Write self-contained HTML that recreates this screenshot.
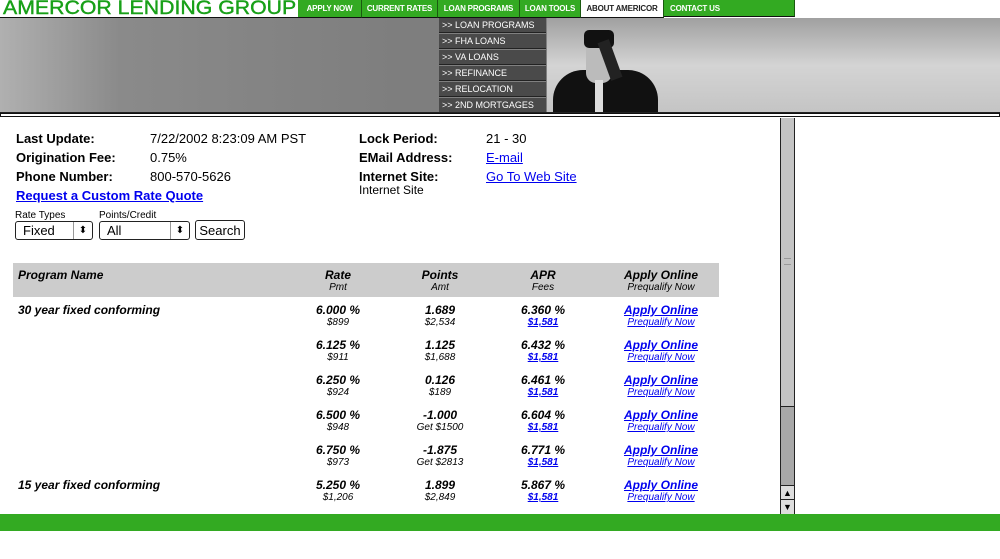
<!DOCTYPE html>
<html><head><style>
body{margin:0;width:1000px;height:559px;overflow:hidden;background:#fff;font-family:"Liberation Sans",Arial,sans-serif;position:relative}
.a{position:absolute}
.nav{top:0;height:17px;background:#33aa22;color:#fff;font-size:8px;font-weight:bold;line-height:17px;text-align:center;border-right:1px solid #1a5a10;border-bottom:1px solid #111;white-space:nowrap;overflow:hidden;letter-spacing:-0.2px}
.dd{left:439px;width:107px;height:15px;background:#4a4a4a;border-bottom:1px solid #222;color:#fff;font-size:9px;line-height:15px;padding-left:3px;box-sizing:border-box;white-space:nowrap}
.l{font-size:13px;font-weight:bold}
.v{font-size:13px}
a{color:#00e}
.c{text-align:center;width:120px;font-style:italic}
.b{font-size:12px;font-weight:bold}
.s{font-size:10px}
</style></head><body>
<div class="a" style="left:0;top:0;width:298px;height:18px;border-bottom:1px solid #111;box-sizing:border-box;color:#18a018;font-size:19px;line-height:18px;padding-left:3px;white-space:nowrap"><span style="display:inline-block;transform:scaleX(1.12);transform-origin:left;-webkit-text-stroke:0.4px #18a018">AMERCOR LENDING GROUP</span></div>
<div class="a nav" style="left:298px;width:63px">APPLY NOW</div>
<div class="a nav" style="left:362px;width:75px">CURRENT RATES</div>
<div class="a nav" style="left:438px;width:81px">LOAN PROGRAMS</div>
<div class="a nav" style="left:520px;width:60px">LOAN TOOLS</div>
<div class="a nav" style="left:581px;width:82px;background:#fff;color:#222">ABOUT AMERICOR</div>
<div class="a nav" style="left:664px;width:131px;text-align:left;padding-left:6px;box-sizing:border-box">CONTACT US</div>
<div class="a" style="left:0;top:18px;width:1000px;height:95px;background:linear-gradient(90deg,#b0b0b0 0%,#8a8a8a 12%,#7e7e7e 40%,#858585 100%)"></div>
<div class="a" style="left:547px;top:18px;width:453px;height:95px;background:linear-gradient(180deg,#a0a0a0,#d4d4d4 50%,#c4c4c4)"></div>
<div class="a" style="left:553px;top:70px;width:105px;height:43px;background:#111;border-radius:30px 30px 0 0"></div>
<div class="a" style="left:586px;top:38px;width:26px;height:45px;background:#bbb;border-radius:10px"></div>
<div class="a" style="left:584px;top:30px;width:30px;height:18px;background:#111;border-radius:5px"></div>
<div class="a" style="left:604px;top:40px;width:12px;height:40px;background:#222;transform:rotate(-20deg)"></div>
<div class="a" style="left:595px;top:80px;width:8px;height:33px;background:#ddd"></div>
<div class="a dd" style="top:18px">&gt;&gt; LOAN PROGRAMS</div>
<div class="a dd" style="top:34px">&gt;&gt; FHA LOANS</div>
<div class="a dd" style="top:50px">&gt;&gt; VA LOANS</div>
<div class="a dd" style="top:66px">&gt;&gt; REFINANCE</div>
<div class="a dd" style="top:82px">&gt;&gt; RELOCATION</div>
<div class="a dd" style="top:98px">&gt;&gt; 2ND MORTGAGES</div>
<div class="a" style="left:0;top:113px;width:1000px;height:4px;border:1px solid #111;box-sizing:border-box;background:#fff"></div>
<div class="a" style="left:0;top:112px;width:1000px;height:1px;background:#222"></div>
<div class="a" style="left:780px;top:118px;width:15px;height:396px;background:#c4c4c4;border-left:1px solid #222;border-right:1px solid #222;box-sizing:border-box"></div>
<div class="a" style="left:784px;top:258px;width:7px;height:5px;border-top:1px solid #999;border-bottom:1px solid #999"></div>
<div class="a" style="left:781px;top:406px;width:13px;height:79px;background:#a8a8a8;border-top:1px solid #222"></div>
<div class="a" style="left:781px;top:485px;width:13px;height:14px;background:#ddd;border-top:1px solid #222;font-size:9px;line-height:14px;text-align:center">▲</div>
<div class="a" style="left:781px;top:499px;width:13px;height:14px;background:#ddd;border-top:1px solid #222;font-size:9px;line-height:14px;text-align:center">▼</div>
<div class="a" style="left:0;top:514px;width:1000px;height:17px;background:#33aa22"></div>

<div class="a l" style="left:16px;top:131px">Last Update:</div><div class="a v" style="left:150px;top:131px">7/22/2002 8:23:09 AM PST</div>
<div class="a l" style="left:16px;top:150px">Origination Fee:</div><div class="a v" style="left:150px;top:150px">0.75%</div>
<div class="a l" style="left:16px;top:169px">Phone Number:</div><div class="a v" style="left:150px;top:169px">800-570-5626</div>
<div class="a l" style="left:16px;top:188px"><a href="#">Request a Custom Rate Quote</a></div>
<div class="a l" style="left:359px;top:131px">Lock Period:</div><div class="a v" style="left:486px;top:131px">21 - 30</div>
<div class="a l" style="left:359px;top:150px">EMail Address:</div><div class="a v" style="left:486px;top:150px"><a href="#">E-mail</a></div>
<div class="a l" style="left:359px;top:169px">Internet Site:</div><div class="a v" style="left:486px;top:169px"><a href="#">Go To Web Site</a></div>
<div class="a" style="left:359px;top:183px;font-size:12px">Internet Site</div>
<div class="a" style="left:15px;top:210px;font-size:10px">Rate Types</div>
<div class="a" style="left:99px;top:210px;font-size:10px">Points/Credit</div>
<div class="a" style="left:15px;top:221px;width:78px;height:19px;border:1px solid #222;border-radius:3px;font-size:13px;line-height:18px;padding-left:7px;box-sizing:border-box">Fixed<span style="position:absolute;right:0;top:0;width:18px;height:17px;border-left:1px solid #999;text-align:center;font-size:10px">⬍</span></div>
<div class="a" style="left:99px;top:221px;width:91px;height:19px;border:1px solid #222;border-radius:3px;font-size:13px;line-height:18px;padding-left:7px;box-sizing:border-box">All<span style="position:absolute;right:0;top:0;width:18px;height:17px;border-left:1px solid #999;text-align:center;font-size:10px">⬍</span></div>
<div class="a" style="left:195px;top:220px;width:50px;height:20px;border:1px solid #222;border-radius:3px;font-size:13px;line-height:19px;text-align:center;box-sizing:border-box">Search</div>

<div class="a" style="left:13px;top:263px;width:706px;height:34px;background:#ccc"></div>
<div class="a b" style="left:18px;top:268px;font-style:italic">Program Name</div>
<div class="a c" style="left:278px;top:268px"><div class="b">Rate</div><div class="s">Pmt</div></div>
<div class="a c" style="left:380px;top:268px"><div class="b">Points</div><div class="s">Amt</div></div>
<div class="a c" style="left:483px;top:268px"><div class="b">APR</div><div class="s">Fees</div></div>
<div class="a c" style="left:601px;top:268px"><div class="b">Apply Online</div><div class="s">Prequalify Now</div></div>

<div class="a b" style="left:18px;top:303px;font-style:italic">30 year fixed conforming</div>
<div class="a b" style="left:18px;top:478px;font-style:italic">15 year fixed conforming</div>

<div class="a" style="left:0;top:303px">
<div class="a c" style="left:278px;top:0"><div class="b">6.000 %</div><div class="s">$899</div></div>
<div class="a c" style="left:380px;top:0"><div class="b">1.689</div><div class="s">$2,534</div></div>
<div class="a c" style="left:483px;top:0"><div class="b">6.360 %</div><div class="s b"><a href="#">$1,581</a></div></div>
<div class="a c" style="left:601px;top:0"><div class="b"><a href="#">Apply Online</a></div><div class="s"><a href="#">Prequalify Now</a></div></div>
</div>
<div class="a" style="left:0;top:338px">
<div class="a c" style="left:278px;top:0"><div class="b">6.125 %</div><div class="s">$911</div></div>
<div class="a c" style="left:380px;top:0"><div class="b">1.125</div><div class="s">$1,688</div></div>
<div class="a c" style="left:483px;top:0"><div class="b">6.432 %</div><div class="s b"><a href="#">$1,581</a></div></div>
<div class="a c" style="left:601px;top:0"><div class="b"><a href="#">Apply Online</a></div><div class="s"><a href="#">Prequalify Now</a></div></div>
</div>
<div class="a" style="left:0;top:373px">
<div class="a c" style="left:278px;top:0"><div class="b">6.250 %</div><div class="s">$924</div></div>
<div class="a c" style="left:380px;top:0"><div class="b">0.126</div><div class="s">$189</div></div>
<div class="a c" style="left:483px;top:0"><div class="b">6.461 %</div><div class="s b"><a href="#">$1,581</a></div></div>
<div class="a c" style="left:601px;top:0"><div class="b"><a href="#">Apply Online</a></div><div class="s"><a href="#">Prequalify Now</a></div></div>
</div>
<div class="a" style="left:0;top:408px">
<div class="a c" style="left:278px;top:0"><div class="b">6.500 %</div><div class="s">$948</div></div>
<div class="a c" style="left:380px;top:0"><div class="b">-1.000</div><div class="s">Get $1500</div></div>
<div class="a c" style="left:483px;top:0"><div class="b">6.604 %</div><div class="s b"><a href="#">$1,581</a></div></div>
<div class="a c" style="left:601px;top:0"><div class="b"><a href="#">Apply Online</a></div><div class="s"><a href="#">Prequalify Now</a></div></div>
</div>
<div class="a" style="left:0;top:443px">
<div class="a c" style="left:278px;top:0"><div class="b">6.750 %</div><div class="s">$973</div></div>
<div class="a c" style="left:380px;top:0"><div class="b">-1.875</div><div class="s">Get $2813</div></div>
<div class="a c" style="left:483px;top:0"><div class="b">6.771 %</div><div class="s b"><a href="#">$1,581</a></div></div>
<div class="a c" style="left:601px;top:0"><div class="b"><a href="#">Apply Online</a></div><div class="s"><a href="#">Prequalify Now</a></div></div>
</div>
<div class="a" style="left:0;top:478px">
<div class="a c" style="left:278px;top:0"><div class="b">5.250 %</div><div class="s">$1,206</div></div>
<div class="a c" style="left:380px;top:0"><div class="b">1.899</div><div class="s">$2,849</div></div>
<div class="a c" style="left:483px;top:0"><div class="b">5.867 %</div><div class="s b"><a href="#">$1,581</a></div></div>
<div class="a c" style="left:601px;top:0"><div class="b"><a href="#">Apply Online</a></div><div class="s"><a href="#">Prequalify Now</a></div></div>
</div>
</body></html>
